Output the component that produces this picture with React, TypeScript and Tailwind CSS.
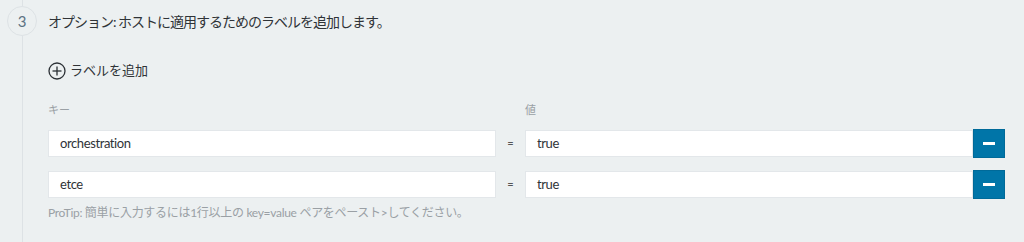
import React from "react";

const font = { fontFamily: 'Lato, "Noto Sans CJK JP", sans-serif' };

function Row({ k, v }: { k: string; v: string }) {
  return (
    <div className="flex items-center h-[29px]">
      <div className="w-[448px] h-[27px] bg-white border border-[#e3e7ea] flex items-center px-[11px] text-[13px] tracking-[-0.4px] text-[#2f3337]">
        {k}
      </div>
      <div className="w-[29px] flex justify-center text-[11px] text-[#555] leading-none pb-[2px]">=</div>
      <div className="w-[448px] h-[27px] bg-white border border-[#e3e7ea] flex items-center px-[11px] text-[13px] tracking-[-0.4px] text-[#2f3337]">
        {v}
      </div>
      <button className="w-[32px] h-[29px] bg-[#0075a8] border border-[#006a99] flex items-center justify-center">
        <span className="block w-[12px] h-[3px] bg-white" />
      </button>
    </div>
  );
}

export default function App() {
  return (
    <div className="w-[1024px] h-[242px] bg-[#ecf0f1] flex overflow-hidden" style={font}>
      <div className="ml-[7px] w-[30px] flex flex-col items-center">
        <div className="w-px h-[6px] bg-[#dde2e5]" />
        <div className="w-[30px] h-[30px] rounded-full border border-[#dde2e5] flex items-center justify-center text-[15px] text-[#5d7383]">
          3
        </div>
        <div className="w-px flex-1 bg-[#dde2e5]" />
      </div>
      <div className="ml-[11px] flex flex-col">
        <div className="mt-[6px] h-[30px] flex items-center text-[14px] tracking-[-1px] text-[#2f3337]">
          オプション: ホストに適用するためのラベルを追加します。
        </div>
        <div className="mt-[25px] h-[20px] flex items-center text-[13px] text-[#2f3337]">
          <svg width="18" height="18" viewBox="0 0 18 18" className="mr-[4px]">
            <circle cx="9" cy="9" r="8" fill="none" stroke="#2b3035" strokeWidth="1.3" />
            <line x1="9" y1="4.5" x2="9" y2="13.5" stroke="#2b3035" strokeWidth="1.3" />
            <line x1="4.5" y1="9" x2="13.5" y2="9" stroke="#2b3035" strokeWidth="1.3" />
          </svg>
          ラベルを追加
        </div>
        <div className="mt-[22px] h-[14px] flex items-center text-[11px] text-[#9aa0a5]">
          <span className="w-[477px]">キー</span>
          <span>値</span>
        </div>
        <div className="mt-[12px]">
          <Row k="orchestration" v="true" />
        </div>
        <div className="mt-[12px]">
          <Row k="etce" v="true" />
        </div>
        <div className="mt-[6px] h-[16px] flex items-center text-[12px] tracking-[-0.3px] text-[#9aa0a5]">
          ProTip: 簡単に入力するには1行以上の key=value ペアをペースト&gt;してください。
        </div>
      </div>
    </div>
  );
}
